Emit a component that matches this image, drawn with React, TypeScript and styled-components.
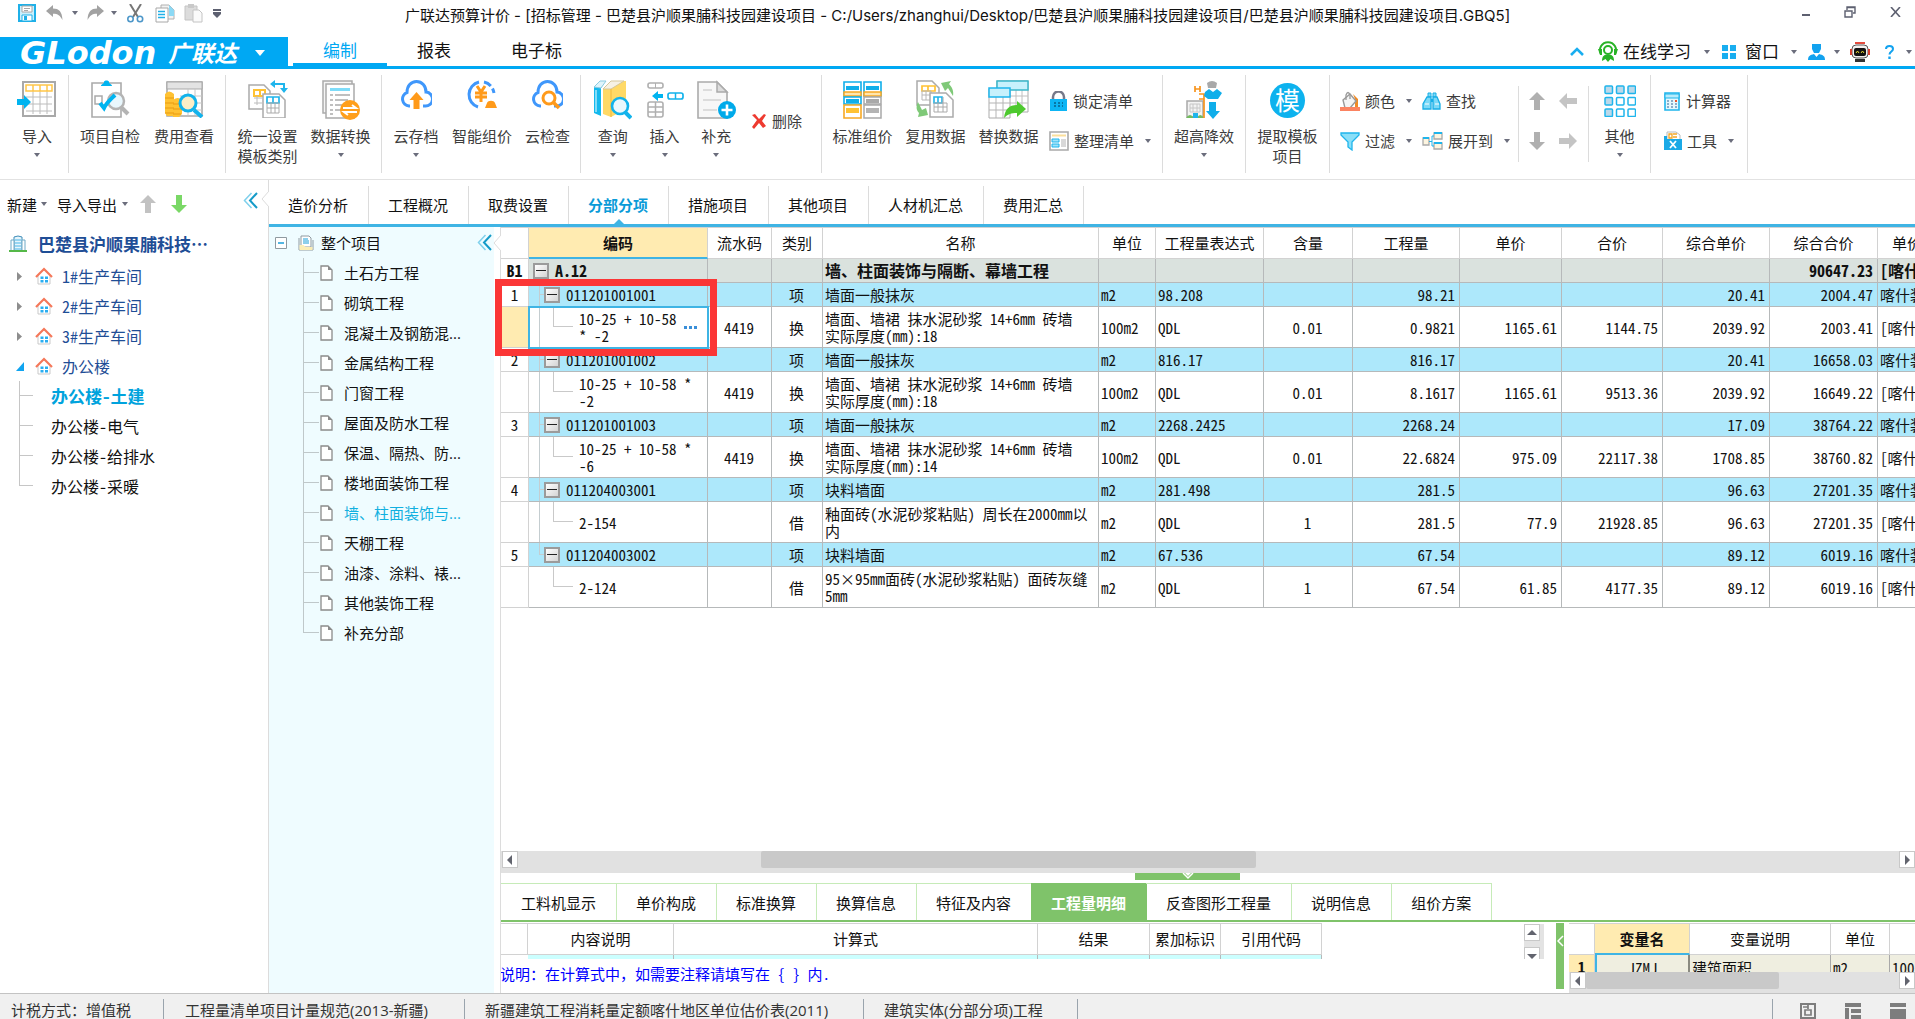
import React from "react";
import styled, { createGlobalStyle, css } from "styled-components";

const UI = `"Open Sans", "Noto Sans CJK SC", sans-serif`;
const MONO = `"Noto Sans Mono CJK SC", "Liberation Mono", "Noto Sans CJK SC", monospace`;
const BLUE = "#00a8f3";
const LINE = "#3fb4e4";
const GREEN = "#7fc36a";

const GlobalStyle = createGlobalStyle`
  *, *::before, *::after { box-sizing: border-box; }
  body { margin: 0; overflow: hidden; background: #fff; font-family: ${UI}; font-size: 15px; color: #111; }
  button { font: inherit; color: inherit; border: 0; background: none; padding: 0; margin: 0; cursor: pointer; white-space: nowrap; }
  ul { list-style: none; margin: 0; padding: 0; }
  svg { display: block; flex: none; }
`;

const Page = styled.div`
  display: flex;
  flex-direction: column;
  height: 100vh;
  overflow: hidden;
`;

const Caret = styled.span<{ $gap?: number }>`
  flex: none;
  width: 0;
  height: 0;
  margin-left: ${(p) => p.$gap ?? 0}px;
  border: 3px solid transparent;
  border-top: 4px solid #6b6d7c;
  border-bottom: 0;
`;

/* ---------- title bar ---------- */

const TitleBar = styled.header`
  display: grid;
  grid-template-columns: 1fr auto 1fr;
  height: 37px;
  flex: none;
`;
const QuickBar = styled.div`
  display: flex;
  align-items: center;
  height: 26px;
  padding-left: 18px;
`;
const QuickButton = styled.button<{ $gap: number }>`
  display: flex;
  align-items: center;
  margin-right: ${(p) => p.$gap}px;
`;
const Title = styled.h1`
  margin: 0;
  font-family: Inter, "Noto Sans CJK SC", sans-serif;
  font-size: 15px;
  font-weight: 400;
  line-height: 32px;
  white-space: nowrap;
`;
const WindowButtons = styled.div`
  display: flex;
  justify-content: flex-end;
  align-items: center;
  gap: 34px;
  height: 24px;
  padding-right: 14px;
`;

/* ---------- main menu ---------- */

const MenuBar = styled.nav`
  display: flex;
  align-items: stretch;
  flex: none;
  height: 32px;
  border-bottom: 3px solid ${BLUE};
`;
const Brand = styled.button`
  display: flex;
  align-items: center;
  width: 288px;
  height: 32px;
  padding-left: 20px;
  margin-right: 5px;
  background: ${BLUE};
  color: #fff;
  line-height: 31px;
`;
const BrandLatin = styled.span`
  font: italic 700 32px/31px "DejaVu Sans", sans-serif;
  width: 148px;
  text-align: left;
`;
const BrandCjk = styled.span`
  font-size: 23px;
  font-style: italic;
  font-weight: 700;
`;
const BrandCaret = styled.span`
  margin-left: 18px;
  border: 5px solid transparent;
  border-top: 6px solid #fff;
  border-bottom: 0;
`;
const MenuTab = styled.button<{ $active?: boolean }>`
  height: 29px;
  padding: 0 30px;
  font-size: 17px;
  line-height: 28px;
  color: ${(p) => (p.$active ? BLUE : "#111")};
  border-bottom: 3px solid ${(p) => (p.$active ? BLUE : "transparent")};
`;
const MenuRight = styled.div`
  display: flex;
  align-items: center;
  margin-left: auto;
  padding-right: 3px;
`;
const MenuTool = styled.button<{ $gap?: number; $inner?: number }>`
  display: flex;
  align-items: center;
  margin-left: ${(p) => p.$gap ?? 12}px;
  font-size: 17px;
  line-height: 28px;
  gap: ${(p) => p.$inner ?? 5}px;
`;

/* ---------- ribbon ---------- */

const Ribbon = styled.div`
  display: flex;
  flex: none;
  height: 111px;
  padding: 6px 0;
  border-bottom: 1px solid #e2e2e2;
  color: #3c3c3c;
`;
const Group = styled.div<{ $w: number; $pad?: number }>`
  display: flex;
  flex: none;
  width: ${(p) => p.$w}px;
  padding-left: ${(p) => p.$pad ?? 0}px;
  border-right: 1px solid #dcdcdc;
`;
const BigButton = styled.button<{ $w: number }>`
  display: flex;
  flex-direction: column;
  align-items: center;
  width: ${(p) => p.$w}px;
  padding-top: 5px;
  line-height: 20px;
  ${Caret} { margin-top: 7px; }
`;
const IconBox = styled.span`
  display: flex;
  justify-content: center;
  align-items: flex-start;
  height: 39px;
  margin-bottom: 7px;
`;
const SmallGrid = styled.div<{ $cols: string; $single?: boolean; $left?: number }>`
  display: grid;
  grid-template-columns: ${(p) => p.$cols};
  grid-template-rows: ${(p) => (p.$single ? "80px" : "40px 40px")};
  padding: 6px 0 6px ${(p) => p.$left ?? 0}px;
  align-items: center;
`;
const SmallButton = styled.button`
  display: flex;
  align-items: center;
  gap: 5px;
  line-height: 20px;
`;
const ArrowGrid = styled.div`
  display: grid;
  grid-template-columns: 31px 31px;
  grid-template-rows: 40px 40px;
  width: 71px;
  height: 76px;
  margin-top: 11px;
  padding: 0 0 6px 9px;
  border: solid #dcdcdc;
  border-width: 0 1px;
  place-items: center start;
  align-content: center;
`;
const TilesBox = styled.span`
  padding-top: 5px;
`;
const RoundGlyph = styled.span`
  display: flex;
  align-items: center;
  justify-content: center;
  width: 35px;
  height: 35px;
  margin-top: 3px;
  border-radius: 50%;
  background: #0db2ee;
  color: #fff;
  font-size: 25px;
  line-height: 35px;
`;

/* ---------- panels ---------- */

const Body = styled.div`
  display: flex;
  flex: 1;
  min-height: 0;
`;
const ProjectPanel = styled.aside`
  position: relative;
  flex: none;
  width: 269px;
  border-right: 1px solid #dcdcdc;
`;
const PanelTools = styled.div`
  display: flex;
  align-items: center;
  height: 48px;
  padding: 0 10px 0 7px;
`;
const PanelTool = styled.button<{ $gap?: number }>`
  display: flex;
  align-items: center;
  margin-left: ${(p) => p.$gap ?? 0}px;
`;
const CollapseButton = styled.button<{ $raised?: boolean }>`
  margin-left: auto;
  padding-bottom: ${(p) => (p.$raised ? 8 : 0)}px;
`;
const Notch = styled.svg<{ $top: number }>`
  position: absolute;
  right: -1px;
  top: ${(p) => p.$top}px;
`;
const ProjectTree = styled.ul`
  font-family: ${MONO};
  font-size: 16px;
  color: #1f4e96;
`;
const ProjectRow = styled.li<{ $root?: boolean }>`
  display: flex;
  align-items: center;
  height: 30px;
  padding-left: ${(p) => (p.$root ? 9 : 16)}px;
  ${(p) =>
    p.$root &&
    css`
      font-size: 17px;
      font-weight: 700;
      margin-bottom: 3px;
    `}
`;
const Twisty = styled.span`
  width: 19px;
`;
const TreeText = styled.button<{ $gap: number }>`
  margin-left: ${(p) => p.$gap}px;
`;
const SubTree = styled.ul`
  margin-left: 19px;
  color: #111;
`;
const SubRow = styled.li<{ $active?: boolean }>`
  display: flex;
  height: 30px;
  line-height: 30px;
  font-family: ${MONO};
  font-size: 16px;
  border-left: 1px solid #c6c6c6;
  &::before {
    content: "";
    width: 13px;
    height: 15px;
    margin-right: 18px;
    border-bottom: 1px solid #c6c6c6;
  }
  &:last-child { border-left-color: transparent; }
  &:last-child::before {
    margin-left: -1px;
    width: 14px;
    border-left: 1px solid #c6c6c6;
  }
  ${(p) =>
    p.$active &&
    css`
      color: #00a3dd;
      font-size: 17px;
      font-weight: 700;
    `}
`;

const Work = styled.main`
  display: flex;
  flex-direction: column;
  flex: 1;
  min-width: 0;
`;
const WorkTabs = styled.div`
  display: flex;
  align-items: flex-end;
  flex: none;
  height: 47px;
  border-bottom: 3px solid ${LINE};
`;
const WorkTab = styled.button<{ $active?: boolean }>`
  position: relative;
  height: 38px;
  padding: 0 20px 0 19px;
  border-right: 1px solid #dcdcdc;
  line-height: 38px;
  ${(p) =>
    p.$active &&
    css`
      color: #0a9bd8;
      font-weight: 700;
      &::after {
        content: "";
        position: absolute;
        left: 50%;
        bottom: 0;
        margin-left: -5px;
        border: 5px solid transparent;
        border-top: 0;
        border-bottom-color: ${LINE};
      }
    `}
`;
const WorkBody = styled.div`
  display: flex;
  flex: 1;
  min-height: 0;
`;
const SectionPanel = styled.aside`
  position: relative;
  flex: none;
  width: 232px;
  border-right: 1px solid #dcdcdc;
  padding-right: 6px;
`;
const SectionTree = styled.div`
  height: 100%;
  background: #effcff;
`;
const SectionRoot = styled.div`
  display: flex;
  align-items: center;
  height: 31px;
  padding: 0 2px 0 6px;
`;
const RootLabel = styled.button`
  display: flex;
  align-items: center;
  gap: 7px;
  margin-left: 11px;
`;
const SectionList = styled.ul`
  margin-left: 34px;
`;
const SectionRow = styled.li<{ $active?: boolean }>`
  display: flex;
  height: 30px;
  line-height: 30px;
  border-left: 1px solid #bfc8ca;
  color: ${(p) => (p.$active ? "#12b0e0" : "#111")};
  svg { margin: 7px 11px 0 1px; }
  &::before {
    content: "";
    width: 15px;
    height: 15px;
    border-bottom: 1px solid #bfc8ca;
  }
  &:last-child { border-left-color: transparent; }
  &:last-child::before {
    margin-left: -1px;
    width: 16px;
    border-left: 1px solid #bfc8ca;
  }
`;

const DataPanel = styled.section`
  display: flex;
  flex-direction: column;
  flex: 1;
  min-width: 0;
`;

/* ---------- bill grid ---------- */

const GridArea = styled.div`
  position: relative;
  flex: 1;
  min-height: 0;
`;
const GridClip = styled.div`
  height: 100%;
  overflow: hidden;
`;
const GridTable = styled.table`
  table-layout: fixed;
  width: 0;
  border-spacing: 0;
  font-family: ${MONO};
  font-size: 15px;
  line-height: 17px;
  color: #111;
`;
const Col = styled.col<{ $w: number }>`
  width: ${(p) => p.$w}px;
`;
const Th = styled.th<{ $hot?: boolean; $left?: boolean }>`
  height: 32px;
  padding: 1px 0 0 ${(p) => (p.$left ? 14 : 0)}px;
  overflow: hidden;
  white-space: nowrap;
  text-align: ${(p) => (p.$left ? "left" : "center")};
  font-family: ${UI};
  font-weight: ${(p) => (p.$hot ? 700 : 400)};
  background: ${(p) => (p.$hot ? "#ffebb1" : "#fff")};
  border: solid #d2d2d2;
  border-width: 1px 1px 1px 0;
  ${(p) => p.$hot && css`border-bottom: 2px solid ${LINE};`}
`;
type Kind = "total" | "item" | "sub";
const rowBg: Record<Kind, string> = { total: "#dae2de", item: "#ade8fb", sub: "#fff" };
const Row = styled.tr<{ $kind: Kind }>`
  height: ${(p) => (p.$kind === "sub" ? 41 : 24)}px;
  background: ${(p) => rowBg[p.$kind]};
  font-size: ${(p) => (p.$kind === "total" ? 16 : 15)}px;
  font-weight: ${(p) => (p.$kind === "total" ? 700 : 400)};
`;
const Td = styled.td<{ $align?: "left" | "center" | "right"; $selected?: boolean }>`
  padding: 0 4px 0 ${(p) => (p.$align === "center" ? 3 : 2)}px;
  overflow: hidden;
  white-space: pre;
  text-align: ${(p) => p.$align ?? "left"};
  border: solid #b6b9ba;
  border-width: 0 1px 1px 0;
  ${(p) =>
    p.$selected &&
    css`
      outline: 2px solid ${LINE};
      outline-offset: -1px;
    `}
`;
const RowHead = styled.th<{ $hot?: boolean; $bold?: boolean }>`
  padding: 0;
  font-weight: ${(p) => (p.$bold ? 700 : "inherit")};
  background: ${(p) => (p.$hot ? "#ffebb1" : "#fff")};
  border: solid #d2d2d2;
  border-width: 0 1px 1px 0;
`;
const CodeCell = styled.div<{ $h: number }>`
  display: flex;
  align-items: center;
  height: ${(p) => p.$h}px;
  margin: 0 -4px 0 -2px;
`;
const Trunk = styled.span<{ $end?: boolean }>`
  align-self: flex-start;
  width: 11px;
  height: ${(p) => (p.$end ? "50%" : "100%")};
  border-right: 1px solid #c4cdd0;
`;
const Elbow = styled.span<{ $after: number }>`
  align-self: flex-start;
  width: 20px;
  height: 20px;
  margin: 0 6px 0 ${(p) => p.$after}px;
  border: solid #c9c9c9;
  border-width: 0 0 1px 1px;
`;
const Stub = styled.span<{ $blank?: boolean }>`
  width: 4px;
  border-top: 1px solid ${(p) => (p.$blank ? "transparent" : "#c4cdd0")};
`;
const FoldBox = styled.button`
  display: flex;
  align-items: center;
  justify-content: center;
  width: 16px;
  height: 16px;
  margin-right: 6px;
  border: 2px solid #9b9b9b;
  background: linear-gradient(135deg, #fff, #d4d4d4);
  &::before {
    content: "";
    width: 10px;
    height: 1px;
    background: #222;
  }
`;
const More = styled.button`
  display: flex;
  gap: 2px;
  margin-left: auto;
  margin-right: 10px;
  span { width: 3px; height: 3px; background: #3a8fd9; }
`;
const Highlight = styled.div`
  position: absolute;
  left: -6px;
  top: 52px;
  width: 222px;
  height: 77px;
  border: 7px solid #fb3636;
  pointer-events: none;
`;

/* ---------- scroll bars ---------- */

const HScroll = styled.div`
  display: flex;
  align-items: flex-start;
  flex: none;
  height: 22px;
  padding-left: 1px;
  background: #e1e1e1;
  overflow: hidden;
`;
const ScrollButton = styled.button`
  display: flex;
  align-items: center;
  justify-content: center;
  flex: none;
  width: 16px;
  height: 17px;
  background: #fff;
  border: 1px solid #c8c8c8;
`;
const Thumb = styled.span<{ $w: string; $before: string }>`
  width: ${(p) => p.$w};
  height: 17px;
  margin-left: ${(p) => p.$before};
  margin-right: auto;
  border-radius: 2px;
  background: #c9c9c9;
`;

/* ---------- lower panel ---------- */

const HandleRow = styled.div`
  display: flex;
  justify-content: center;
  flex: none;
  height: 10px;
  padding-right: 41px;
`;
const Handle = styled.button`
  display: flex;
  justify-content: center;
  width: 105px;
  height: 7px;
  background: ${GREEN};
`;
const DetailTabs = styled.div`
  display: flex;
  flex: none;
  height: 39px;
  border-bottom: 2px solid ${GREEN};
`;
const DetailTab = styled.button<{ $active?: boolean }>`
  padding: 2px 20px 0 20px;
  border: solid #c6ebb8;
  border-width: 1px 1px 0 0;
  margin-left: -1px;
  &:first-child { margin-left: 0; }
  line-height: 34px;
  ${(p) =>
    p.$active &&
    css`
      border-color: ${GREEN};
      background: ${GREEN};
      color: #fff;
      font-weight: 700;
    `}
`;
const Details = styled.div`
  display: flex;
  flex: none;
  height: 71px;
`;
const FormulaPane = styled.div`
  flex: 1;
  min-width: 0;
`;
const FormulaTop = styled.div`
  display: flex;
  height: 37px;
  padding-right: 12px;
`;
const TableClip = styled.div<{ $h: number }>`
  flex: 1;
  height: ${(p) => p.$h}px;
  overflow: hidden;
  padding-top: 1px;
`;
const VScroll = styled.div`
  display: flex;
  flex-direction: column;
  gap: 6px;
  width: 20px;
  margin-top: 2px;
  height: 35px;
  overflow: hidden;
  background: #e3e3e3;
`;
const Hint = styled.p`
  margin: 0 0 0 -1px;
  font-family: ${MONO};
  line-height: 30px;
  color: #0000ff;
  white-space: nowrap;
`;
const Splitter = styled.button`
  display: flex;
  align-items: flex-start;
  justify-content: center;
  width: 8px;
  height: 66px;
  padding-top: 12px;
  margin: 1px 5px 0 0;
  background: ${GREEN};
`;
const VariablePane = styled.div`
  flex: none;
  width: 346px;
  overflow: hidden;
`;
const FormulaCell = styled.td`
  height: 12px;
  padding: 0;
  background: #ccffff;
  border-right: 1px solid #b6b9ba;
`;
const VarCell = styled.td<{ $on?: boolean; $center?: boolean }>`
  height: 24px;
  padding: 0 2px;
  background: #efeee0;
  border-right: 1px solid #a9a9a9;
  text-align: ${(p) => (p.$center ? "center" : "left")};
  white-space: nowrap;
  ${(p) =>
    p.$on &&
    css`
      border-left: 2px solid ${LINE};
      border-right: 2px solid #8a8a80;
    `}
`;

/* ---------- status bar ---------- */

const StatusBar = styled.footer`
  display: flex;
  align-items: flex-end;
  flex: none;
  height: 26px;
  border-top: 1px solid #c3c3c3;
  background: #f0f0f0;
  color: #333;
  overflow: hidden;
`;
const Status = styled.span<{ $w: number; $pad: number }>`
  width: ${(p) => p.$w}px;
  height: 20px;
  padding-left: ${(p) => p.$pad}px;
  border-right: 1px solid #9aa4ad;
  line-height: 22px;
  white-space: nowrap;
`;
const Views = styled.div`
  display: flex;
  gap: 29px;
  height: 20px;
  margin-left: auto;
  padding: 4px 9px 0 27px;
  border-left: 1px solid #9aa4ad;
`;

/* ---------- icons ---------- */

type SvgP = { w: number; h: number; children: React.ReactNode };
const S = ({ w, h, children }: SvgP) => (
  <svg width={w} height={h} viewBox={`0 0 ${w} ${h}`} fill="none" aria-hidden="true">
    {children}
  </svg>
);

const SaveIcon = () => (
  <S w={18} h={18}>
    <path d="M1 1h16v16H1z" stroke="#1fb0e8" strokeWidth="2" fill="#c9effc" />
    <path d="M4 2h10v6H4z" fill="#fff" stroke="#a8a8a8" />
    <path d="M6 4.500h6M6 6.500h4" stroke="#a8a8a8" />
    <path d="M4 11h10v6H4z" fill="#fff" stroke="#1fb0e8" />
    <path d="M6 12h3v4H6z" fill="#1fb0e8" />
  </S>
);
const UndoIcon = () => (
  <S w={18} h={16}>
    <path d="M0 6l7-6v3.500c6 0 9 3 9.500 11.500C14 10.500 12 8.700 7 8.700V12z" fill="#a2a2a2" />
  </S>
);
const RedoIcon = () => (
  <S w={18} h={16}>
    <path d="M17 6l-7-6v3.500C4 3.500 1 6.500.5 15 3 10.500 5 8.700 10 8.700V12z" fill="#a2a2a2" />
  </S>
);
const CutIcon = () => (
  <S w={17} h={19}>
    <path d="M3 0l8 13M14 0L6 13" stroke="#777" strokeWidth="2" />
    <circle cx="3.500" cy="15" r="2.700" stroke="#4d97c9" strokeWidth="1.600" />
    <circle cx="13" cy="15" r="2.700" stroke="#4d97c9" strokeWidth="1.600" />
  </S>
);
const CopyIcon = () => (
  <S w={20} h={19}>
    <path d="M6 1h8l5 5v9H6z" fill="#f2f2f2" stroke="#b0b0b0" />
    <path d="M14 1l5 5v6h-5z" fill="#8bd9f5" />
    <path d="M1 4h12v14H1z" fill="#fff" stroke="#a8a8a8" />
    <path d="M3 7.500h7M3 10.500h7M3 13.500h7" stroke="#1fb0e8" strokeWidth="1.600" />
  </S>
);
const PasteIcon = () => (
  <S w={20} h={20}>
    <path d="M1 3h12v14H1z" fill="#dcdcdc" stroke="#c4c4c4" />
    <path d="M4 1h6v4H4z" fill="#c9c9c9" />
    <path d="M9 7h6l3 3v9H9z" fill="#fafafa" stroke="#c4c4c4" />
  </S>
);
const CustomizeIcon = () => (
  <S w={8} h={9}>
    <path d="M0 1h8M0 4h8" stroke="#5d6070" strokeWidth="2" />
    <path d="M0 5h8L4 9z" fill="#5d6070" />
  </S>
);
const MinIcon = () => (
  <S w={9} h={11}>
    <path d="M1 8h8" stroke="#5d6070" strokeWidth="2" />
  </S>
);
const RestoreIcon = () => (
  <S w={12} h={12}>
    <path d="M3 4V1h8v6H9M3 1.500h8" stroke="#5d6070" strokeWidth="1.400" />
    <path d="M1 5h7v6H1z" stroke="#5d6070" strokeWidth="1.400" />
  </S>
);
const CloseIcon = () => (
  <S w={11} h={10}>
    <path d="M1 0l9 10M10 0L1 10" stroke="#5d6070" strokeWidth="1.600" />
  </S>
);
const ChevronUp = () => (
  <S w={14} h={9}>
    <path d="M1 8l6-6 6 6" stroke="#19aef0" strokeWidth="2.600" />
  </S>
);
const LearnIcon = () => (
  <S w={20} h={21}>
    <path d="M3 13a8 8 0 1 1 14 0" stroke="#29b327" strokeWidth="2" />
    <path d="M0 8h4v6H2zM16 8h4l-2 6h-2z" fill="#29b327" />
    <circle cx="10" cy="9" r="4" stroke="#29b327" strokeWidth="2" />
    <path d="M4 20c0-5 2-6.500 6-6.500s6 1.500 6 6.500l-3.500-2L10 21l-2.500-3z" fill="#29b327" />
  </S>
);
const WindowsIcon = () => (
  <S w={14} h={14}>
    <path d="M0 0h6v6H0zM8 0h6v6H8zM0 8h6v6H0zM8 8h6v6H8z" fill="#19aef0" />
  </S>
);
const PersonIcon = () => (
  <S w={17} h={16}>
    <path d="M4 0h9v5l-2 4H6L4 5z" fill="#12a2ef" />
    <path d="M0 16c0-4 2-5 6-6l2.500 3L11 10c4 1 6 2 6 6z" fill="#12a2ef" />
  </S>
);
const RobotIcon = () => (
  <S w={20} h={20}>
    <path d="M5 1h10" stroke="#e44a3c" strokeWidth="2" />
    <rect x="2" y="3" width="16" height="13" rx="4" fill="#f4f0ee" stroke="#555" />
    <path d="M1 7v6M19 7v6" stroke="#d6402f" strokeWidth="2" />
    <rect x="4" y="6" width="12" height="8" rx="2" fill="#111" />
    <path d="M6 11l1.500-2L9 11M11 11l1.500-2 1.500 2" stroke="#e8d832" />
    <path d="M5 17h10v3H5z" fill="#333" />
  </S>
);
const HelpIcon = () => (
  <S w={9} h={14}>
    <path d="M1 4c0-4 7-4 7 0 0 2.500-3.500 2.500-3.500 5.500" stroke="#12a2ef" strokeWidth="2" />
    <path d="M3.300 11.500h2.400V14H3.300z" fill="#12a2ef" />
  </S>
);

const ImportIcon = () => (
  <S w={40} h={38}>
    <path d="M6 2h32v34H6z" fill="#fff" stroke="#a9a9a9" strokeWidth="2" />
    <path d="M9 17h26M9 24h26M9 31h26M16 11v23M23 11v23M30 11v23" stroke="#bcbcbc" />
    <path d="M9 5h26v6H9zM16 5v6M23 5v6M30 5v6" stroke="#ffc648" strokeWidth="1.500" />
    <path d="M0 19h7v-4l7 7-7 7v-4H0z" fill="#00b4f0" />
  </S>
);
const CheckDocIcon = () => (
  <S w={40} h={38}>
    <path d="M2 3h29v34H2z" fill="#fff" stroke="#ababab" strokeWidth="1.600" />
    <path d="M11 6c0-2 3-2 3-4 0-2 5-2 5 0 0 2 3 2 3 4z" fill="#00b4f0" />
    <path d="M5 16h7v8H5z" stroke="#ababab" strokeWidth="1.500" />
    <circle cx="26" cy="21" r="8" fill="#e9f7fd" stroke="#b4b4b4" strokeWidth="2.500" />
    <path d="M10 23l4 5c3-6 7-9 11-13" stroke="#00b4f0" strokeWidth="4" />
    <path d="M31 27l7 7" stroke="#b4b4b4" strokeWidth="4" />
  </S>
);
const CostIcon = () => (
  <S w={40} h={38}>
    <path d="M3 2h35v34H3z" fill="#fff" stroke="#a9a9a9" strokeWidth="1.600" />
    <path d="M3 2h35v7H3z" fill="#e3e3e3" stroke="#a9a9a9" />
    <path d="M16 16h22M16 23h22M16 30h22M24 9v26M31 9v26" stroke="#c6c6c6" />
    <path d="M1 14q4-5 9 0v22H3l-2-3zM9 20q5-4 9 0v14l-3 3H9z" fill="#ffc233" />
    <path d="M1 18h9M1 23h9M1 28h9M1 33h9M9 24h9M9 29h9M9 34h8" stroke="#e89b12" />
    <circle cx="24" cy="23" r="8" fill="#fdeec6" stroke="#12b3ec" strokeWidth="3" />
    <path d="M30 30l8 7" stroke="#12b3ec" strokeWidth="4" />
  </S>
);
const TemplateIcon = () => (
  <S w={40} h={38}>
    <path d="M1 5h15l6 6v18H1z" fill="#fff" stroke="#ababab" strokeWidth="1.500" />
    <path d="M6 10h11v6H6zM12 10v6" stroke="#ffc233" strokeWidth="2" />
    <path d="M6 18h8M6 23h8M9 16v9" stroke="#bcbcbc" />
    <path d="M15 14h16l6 6v18H15z" fill="#fff" stroke="#ababab" strokeWidth="1.500" />
    <path d="M19 17h12v6H19zM25 17v6" stroke="#1fb5ec" strokeWidth="1.700" />
    <path d="M19 23h12v10H19zM19 28h12M23 23v10M27 23v10" stroke="#aaa" />
    <path d="M24 4h12v7" stroke="#1fb5ec" strokeWidth="2" />
    <path d="M22 4l5-4v8zM32 8h8l-4 5z" fill="#1fb5ec" />
  </S>
);
const ConvertIcon = () => (
  <S w={40} h={40}>
    <path d="M2 1h29v32H2z" fill="#f5f5f5" stroke="#aaa" strokeWidth="1.500" />
    <path d="M5 4h28v34H5z" fill="#fff" stroke="#aaa" strokeWidth="1.500" />
    <path d="M9 9.500h20" stroke="#7edcf9" strokeWidth="3" />
    <path d="M9 15h3M14 15h15M9 20h3M14 20h13M9 25h3M14 25h8M9 30h3M14 30h6M9 34h3" stroke="#aaa" strokeWidth="1.500" />
    <circle cx="29" cy="30" r="10" fill="#ff9f1c" />
    <path d="M22 28h13l-4-3M36 32H23l4 3" stroke="#fff" strokeWidth="2" />
  </S>
);
const cloudPath = "M9 26H8a7 7 0 0 1-2-13.500C6 6 10 1.500 15.500 1.500S25 6 25 12a7 7 0 0 1-1 14h-2";
const CloudSaveIcon = () => (
  <S w={31} h={30}>
    <path d={cloudPath} stroke="#3f97fb" strokeWidth="3" />
    <path d="M15.500 12l7 8h-4v9h-6v-9h-4z" fill="#ff9a1a" />
  </S>
);
const SmartIcon = () => (
  <S w={32} h={30}>
    <path d="M13 2a13 13 0 0 0-1 25" stroke="#3f97fb" strokeWidth="3" />
    <path d="M18 2c5 1 9 5 10 11" stroke="#3f97fb" strokeWidth="3" strokeDasharray="8 3" />
    <path d="M11 6l4 6 4-6M9 13h12M9 17h12M15 12v10" stroke="#ff9a1a" strokeWidth="3" />
    <path d="M19 28l2-5c1-3 7-3 8 0l2 5z" fill="#ff9a1a" />
  </S>
);
const CloudCheckIcon = () => (
  <S w={31} h={30}>
    <path d={cloudPath} stroke="#3f97fb" strokeWidth="3" />
    <circle cx="17" cy="18" r="6" fill="#fff" stroke="#ff9a1a" strokeWidth="3" />
    <path d="M21 22l6 6" stroke="#ff9a1a" strokeWidth="3.500" />
  </S>
);
const QueryIcon = () => (
  <S w={39} h={40}>
    <path d="M1 7L7 1h5L8 8v28l-7-3z" fill="#14b9ee" />
    <path d="M1 7l6-6h6l-5 7z" fill="#dff4fb" stroke="#8ccbe0" />
    <path d="M3 10v22" stroke="#a6e8fb" strokeWidth="1.500" />
    <path d="M10 9l8-8h15v28l-15 8-8-3z" fill="#ffd966" />
    <path d="M10 9l8-8h13L18 9z" fill="#f6f1e4" stroke="#d5c79a" />
    <path d="M18 9v28" stroke="#f2b93b" />
    <circle cx="27" cy="26" r="8" fill="#eaf8fd" stroke="#12b3ec" strokeWidth="2.600" />
    <path d="M32 32l6 6" stroke="#12b3ec" strokeWidth="4" />
  </S>
);
const InsertIcon = () => (
  <S w={38} h={38}>
    <rect x="2" y="3" width="15" height="5" rx="2" stroke="#b0b0b0" strokeWidth="1.600" />
    <path d="M9.500 3v5" stroke="#b0b0b0" />
    <rect x="2" y="22" width="15" height="15" rx="2" stroke="#b0b0b0" strokeWidth="1.600" />
    <path d="M2 27h15M2 32h15M9.500 22v15" stroke="#b0b0b0" strokeWidth="1.500" />
    <path d="M6 16l6-5v3h5v4h-5v3z" fill="#00b4f0" />
    <rect x="22" y="13" width="15" height="6" rx="2" stroke="#12b3ec" strokeWidth="1.700" />
    <path d="M29.500 13v6" stroke="#12b3ec" strokeWidth="1.500" />
  </S>
);
const AddDocIcon = () => (
  <S w={39} h={39}>
    <path d="M1 2h19l10 10v26H1z" fill="#f7f7f7" stroke="#ababab" strokeWidth="1.600" />
    <path d="M20 2v10h10z" fill="#dcdcdc" stroke="#ababab" strokeWidth="1.500" />
    <path d="M6 10h9M6 20h18M6 30h14" stroke="#d4d4d4" strokeWidth="1.500" />
    <circle cx="30" cy="30" r="9" fill="#00aaea" />
    <path d="M24.500 30h11M30 24.500v11" stroke="#fff" strokeWidth="2.600" />
  </S>
);
const DeleteIcon = () => (
  <S w={16} h={16}>
    <path d="M1 2l3-1 4 5 5-5 2 1-4 6 4 5-3 2-4-5-5 6-2-2 5-7z" fill="#ee3a30" />
  </S>
);
const StandardIcon = () => (
  <S w={39} h={39}>
    <path d="M1 2h17v14H1zM21 2h17v14H21z" stroke="#10aeea" strokeWidth="1.600" fill="#fff" />
    <path d="M3 6h13v4H3zM23 6h13v4H23z" fill="#10aeea" />
    <path d="M1 12h17v4H1zM21 12h17v4H21z" fill="#ffe6ae" stroke="#f7a824" strokeWidth="1.500" />
    <path d="M1 17h17v7H1z" fill="#fff" stroke="#10aeea" strokeWidth="1.600" />
    <path d="M3 19h13v4H3z" fill="#10aeea" />
    <path d="M21 17h17v7H21z" fill="#fff" stroke="#a9a9a9" strokeWidth="1.500" />
    <path d="M23 19h13v4H23z" fill="#a9a9a9" />
    <path d="M1 25h17v13H1z" fill="#fff" stroke="#f7a824" strokeWidth="1.600" />
    <path d="M3 28h13v5H3z" fill="#ffc233" />
    <path d="M21 25h17v13H21z" fill="#fff" stroke="#a9a9a9" strokeWidth="1.500" />
    <path d="M23 28h13v5H23z" fill="#b4b4b4" />
  </S>
);
const ReuseIcon = () => (
  <S w={39} h={39}>
    <path d="M1 1h15l7 7v17H1z" fill="#fff" stroke="#ababab" strokeWidth="1.500" />
    <path d="M6 6h13v5H6zM12 6v5" stroke="#ffc233" strokeWidth="1.700" />
    <path d="M6 11h9v9H6zM6 15h9M10 11v9" stroke="#b8b8b8" />
    <path d="M14 13h16l7 7v17H14z" fill="#fff" stroke="#ababab" strokeWidth="1.500" />
    <path d="M18 17h8v6h-8zM22 17v6" stroke="#1fb5ec" strokeWidth="1.600" />
    <path d="M18 23h13v9H18zM18 27h13M22 23v9M27 17v15" stroke="#aaa" />
    <path d="M25 3l10-2-2 3c3 3 5 7 4 12l-5-8-3 3z" fill="#7fc978" />
    <path d="M12 35l-10 2 1-4c-3-3-3-7-1-11l4 8 4-2z" fill="#7fc978" />
  </S>
);
const ReplaceIcon = () => (
  <S w={41} h={39}>
    <path d="M9 1h31v31H9z" fill="#fff" stroke="#ababab" />
    <path d="M22 16h18M22 23h18M28 9v22M34 9v22" stroke="#c0c0c0" />
    <path d="M9 1h31v9H9z" fill="#c7f1fc" stroke="#3bb7c9" strokeWidth="1.500" />
    <path d="M1 9h21v29H1z" fill="#fff" stroke="#ababab" />
    <path d="M1 23h21M1 30h21M8 17v21M15 17v21" stroke="#b5b5b5" />
    <path d="M1 8h21v9H1z" fill="#c7f1fc" stroke="#1fb5ec" strokeWidth="1.500" />
    <path d="M16 38c1-9 5-13 13-13v-4l9 8-9 8v-4c-6 0-9 1-13 5z" fill="#4ec92f" />
  </S>
);
const LockIcon = () => (
  <S w={19} h={21}>
    <path d="M4 9V6a5.500 5.500 0 0 1 11 0v3" stroke="#76798a" strokeWidth="2.500" />
    <path d="M1 8h17v12H1z" fill="#0db5f4" />
    <path d="M5 12h2M9 12h2M13 12h1M5 15h2M9 15h2M13 15h1" stroke="#07628a" strokeWidth="1.500" />
  </S>
);
const ArrangeIcon = () => (
  <S w={20} h={20}>
    <path d="M1 1h18v18H1z" fill="#fff" stroke="#a9a9a9" strokeWidth="1.600" />
    <path d="M3 4.500h14" stroke="#fbdf9b" strokeWidth="2" />
    <path d="M3 8h7v3H3zM3 13h7v3H3z" fill="#9fe3fa" stroke="#1fb5ec" />
    <path d="M12 8h5v8h-5z" fill="#d8d8d8" />
  </S>
);
const HighRiseIcon = () => (
  <S w={38} h={40}>
    <path d="M2 21h16v16H2z" fill="#f3f3f3" stroke="#a9a9a9" strokeWidth="1.500" />
    <path d="M5 24h10v8H5zM5 28h10M8 24v8M12 24v8" stroke="#c6c6c6" />
    <path d="M1 38q4-6 8 0zM12 38q3-6 7 0z" fill="#74bb60" />
    <path d="M8 33h5v5H8z" fill="#1fb5ec" />
    <path d="M10 6v6M15 6v6M10 9h5M14 14h5v24M14 19h5" stroke="#f7941d" strokeWidth="1.700" />
    <path d="M22 3q5-4 10 0l-1 5h-8z" fill="#a9a9a9" />
    <path d="M20 12l4-3 4 3 4-3 5 4-4 6H23l-4-3z" fill="#10aeea" />
    <path d="M24 22h7v9h4l-7 8-7-8h3z" fill="#10aeea" />
  </S>
);
const ColorIcon = () => (
  <S w={20} h={21}>
    <path d="M13 3l5 5v8h-3V8z" fill="#f08a24" />
    <path d="M3 9l7-6 6 7-6 7H5z" fill="#f4f4f4" stroke="#999" strokeWidth="1.400" />
    <path d="M6 9V4q2-5 4 0v4" stroke="#999" strokeWidth="1.300" />
    <path d="M0 16h20v4H0z" fill="#fb8361" />
  </S>
);
const FindIcon = () => (
  <S w={19} h={18}>
    <path d="M6 1h3v4H6zM11 1h3v4h-3z" fill="#7cd9f7" stroke="#18aee6" />
    <path d="M5 5h4v12H1v-5zM11 5h4l3 7v5h-7z" fill="#7cd9f7" stroke="#18aee6" strokeWidth="1.300" />
    <path d="M9 7h2v3H9z" fill="#18aee6" />
    <path d="M3 12h4M13 12h4" stroke="#fff" />
  </S>
);
const FilterIcon = () => (
  <S w={20} h={19}>
    <path d="M1 1h18v2l-7 7v8l-4-3v-5L1 3z" fill="#8adff8" stroke="#1fb5ec" strokeWidth="1.300" />
  </S>
);
const ExpandIcon = () => (
  <S w={21} h={20}>
    <path d="M1 7h6v7H1zM12 2h8v6h-8zM12 12h8v6h-8z" fill="#fdf5e0" stroke="#a9a9a9" strokeWidth="1.300" />
    <path d="M1 7h6M12 2h8M12 12h8" stroke="#1fb5ec" strokeWidth="2" />
    <path d="M7 10.500h3M10 5v10M10 5h2M10 15h2" stroke="#1fb5ec" />
  </S>
);
const ArrowSvg = ({ dir, color = "#b0b0b0" }: { dir: number; color?: string }) => (
  <svg width={18} height={18} viewBox="0 0 18 18" aria-hidden="true">
    <path transform={`rotate(${dir} 9 9)`} d="M9 0l8 8h-5v10H6V8H1z" fill={color} />
  </svg>
);
const TilesIcon = () => (
  <S w={32} h={32}>
    {[0, 1, 2].map((r) =>
      [0, 1, 2].map((c) => (
        <rect
          key={`${r}${c}`}
          x={1 + c * 11.5}
          y={1 + r * 11.5}
          width="7.500"
          height="7.500"
          rx="1"
          stroke="#1fb5ec"
          strokeWidth="1.500"
          fill={r === 0 || c === 0 ? "#bcd9ea" : "#fff"}
        />
      )),
    )}
  </S>
);
const CalcIcon = () => (
  <S w={17} h={19}>
    <path d="M1 1h14v17H1z" fill="#e4f7fd" stroke="#1fb5ec" strokeWidth="1.600" />
    <path d="M1 2h14v4H1z" fill="#b8ebfb" stroke="#1fb5ec" />
    <path d="M3 9h2M7 9h2M3 12h2M7 12h2M11 12h2M3 15h2M7 15h2M11 15h2" stroke="#6b95b8" strokeWidth="1.500" />
    <path d="M11 8h2v2h-2z" fill="#e8562f" />
  </S>
);
const ToolIcon = () => (
  <S w={18} h={20}>
    <path d="M3 1h9l4 3v6H3z" fill="#fff" stroke="#bbb" />
    <path d="M5 3h3v4H5zM9 3h4M9 6h4" stroke="#f5a623" strokeWidth="1.300" />
    <path d="M0 5h3v3h15v11H0z" fill="#1ba9e6" />
    <path d="M6 10l6 7M12 10l-6 7" stroke="#fff" strokeWidth="1.800" />
  </S>
);

const DoubleLeft = () => (
  <S w={15} h={17}>
    <path d="M8.500 1L1.500 8.500l7 7.500" stroke="#7fd0ec" strokeWidth="1.500" />
    <path d="M14 1L7 8.500l7 7.500" stroke="#159bc8" strokeWidth="2" />
  </S>
);
const BuildingIcon = () => (
  <S w={18} h={17}>
    <path d="M5 2l4-1 4 1v14H5z" fill="#e6f5fc" stroke="#3d8cb8" />
    <path d="M2 5h3v11H2zM13 5h3v11h-3z" fill="#fff" stroke="#6ea9c6" />
    <path d="M7 4v11M9 4v11M11 4v11" stroke="#48b5e8" strokeDasharray="2 1" />
    <path d="M0 16h18" stroke="#55b848" strokeWidth="2" />
  </S>
);
const HouseIcon = () => (
  <S w={18} h={18}>
    <path d="M3 8v9h12V8L9 3z" fill="#fff" stroke="#c9c9c9" />
    <path d="M1 10l8-8 8 8" stroke="#f5785a" strokeWidth="2.200" />
    <path d="M5.500 9.500h3v2.500h-3zM10 9.500h3v2.500h-3zM5.500 13h3v2.500h-3zM10 13h3v2.500h-3z" fill="#29aef2" />
  </S>
);
const ClosedTwisty = () => (
  <S w={7} h={9}>
    <path d="M1 0l5 4.500L1 9z" fill="#8d8d8d" />
  </S>
);
const OpenTwisty = () => (
  <S w={8} h={9}>
    <path d="M8 0v9H0z" fill="#10a4f0" />
  </S>
);
const RootFold = () => (
  <S w={12} h={12}>
    <path d="M.5.5h11v11H.5z" fill="#fff" stroke="#8f9aa0" />
    <path d="M3 6h6" stroke="#1b9ed8" strokeWidth="1.500" />
  </S>
);
const ProjectIcon = () => (
  <S w={16} h={16}>
    <path d="M3 1h8l2 2v9H3z" fill="#fff" stroke="#8f9aa0" />
    <path d="M5 4h5M5 6h6M5 8h6" stroke="#1b9ed8" />
    <path d="M1 3v12h14V5" stroke="#8f9aa0" />
    <path d="M1.500 10h4l2 2h7v3h-13z" fill="#fbedb5" />
  </S>
);
const PageIcon = () => (
  <S w={13} h={16}>
    <path d="M1 1h7l4 4v10H1z" fill="#fff" stroke="#8b8b8b" strokeWidth="1.300" />
    <path d="M8 1v4h4z" fill="#8b8b8b" />
  </S>
);
const Tri = ({ dir }: { dir: number }) => (
  <svg width={10} height={10} viewBox="0 0 10 10" aria-hidden="true">
    <path transform={`rotate(${dir} 5 5)`} d="M7 0v10L2 5z" fill="#62646e" />
  </svg>
);

/* ---------- data ---------- */

const workTabs = ["造价分析", "工程概况", "取费设置", "分部分项", "措施项目", "其他项目", "人材机汇总", "费用汇总"];
const sections = [
  "土石方工程",
  "砌筑工程",
  "混凝土及钢筋混...",
  "金属结构工程",
  "门窗工程",
  "屋面及防水工程",
  "保温、隔热、防...",
  "楼地面装饰工程",
  "墙、柱面装饰与...",
  "天棚工程",
  "油漆、涂料、裱...",
  "其他装饰工程",
  "补充分部",
];
const detailTabs = ["工料机显示", "单价构成", "标准换算", "换算信息", "特征及内容", "工程量明细", "反查图形工程量", "说明信息", "组价方案"];

const gridCols = [28, 179, 64, 51, 276, 57, 108, 89, 107, 102, 101, 107, 108, 60];
const gridHead = ["", "编码", "流水码", "类别", "名称", "单位", "工程量表达式", "含量", "工程量", "单价", "合价", "综合单价", "综合合价", "单价"];

type Item = {
  kind: Kind;
  no: string;
  code: string;
  serial?: string;
  type?: string;
  name: string;
  unit?: string;
  expr?: string;
  content?: string;
  qty?: string;
  price?: string;
  total?: string;
  unitAll?: string;
  sumAll: string;
  file: string;
  last?: boolean;
  selected?: boolean;
};

const rows: Item[] = [
  { kind: "total", no: "B1", code: "A.12", name: "墙、柱面装饰与隔断、幕墙工程", sumAll: "90647.23", file: "[喀什" },
  { kind: "item", no: "1", code: "011201001001", type: "项", name: "墙面一般抹灰", unit: "m2", expr: "98.208", qty: "98.21", unitAll: "20.41", sumAll: "2004.47", file: "喀什装" },
  { kind: "sub", no: "", code: "10-25 + 10-58\n* -2", serial: "4419", type: "换", name: "墙面、墙裙 抹水泥砂浆 14+6mm 砖墙\n实际厚度(mm):18", unit: "100m2", expr: "QDL", content: "0.01", qty: "0.9821", price: "1165.61", total: "1144.75", unitAll: "2039.92", sumAll: "2003.41", file: "[喀什", selected: true },
  { kind: "item", no: "2", code: "011201001002", type: "项", name: "墙面一般抹灰", unit: "m2", expr: "816.17", qty: "816.17", unitAll: "20.41", sumAll: "16658.03", file: "喀什装" },
  { kind: "sub", no: "", code: "10-25 + 10-58 *\n-2", serial: "4419", type: "换", name: "墙面、墙裙 抹水泥砂浆 14+6mm 砖墙\n实际厚度(mm):18", unit: "100m2", expr: "QDL", content: "0.01", qty: "8.1617", price: "1165.61", total: "9513.36", unitAll: "2039.92", sumAll: "16649.22", file: "[喀什" },
  { kind: "item", no: "3", code: "011201001003", type: "项", name: "墙面一般抹灰", unit: "m2", expr: "2268.2425", qty: "2268.24", unitAll: "17.09", sumAll: "38764.22", file: "喀什装" },
  { kind: "sub", no: "", code: "10-25 + 10-58 *\n-6", serial: "4419", type: "换", name: "墙面、墙裙 抹水泥砂浆 14+6mm 砖墙\n实际厚度(mm):14", unit: "100m2", expr: "QDL", content: "0.01", qty: "22.6824", price: "975.09", total: "22117.38", unitAll: "1708.85", sumAll: "38760.82", file: "[喀什" },
  { kind: "item", no: "4", code: "011204003001", type: "项", name: "块料墙面", unit: "m2", expr: "281.498", qty: "281.5", unitAll: "96.63", sumAll: "27201.35", file: "喀什装" },
  { kind: "sub", no: "", code: "2-154", type: "借", name: "釉面砖(水泥砂浆粘贴) 周长在2000mm以\n内", unit: "m2", expr: "QDL", content: "1", qty: "281.5", price: "77.9", total: "21928.85", unitAll: "96.63", sumAll: "27201.35", file: "[喀什" },
  { kind: "item", no: "5", code: "011204003002", type: "项", name: "块料墙面", unit: "m2", expr: "67.536", qty: "67.54", unitAll: "89.12", sumAll: "6019.16", file: "喀什装", last: true },
  { kind: "sub", no: "", code: "2-124", type: "借", name: "95×95mm面砖(水泥砂浆粘贴) 面砖灰缝\n5mm", unit: "m2", expr: "QDL", content: "1", qty: "67.54", price: "61.85", total: "4177.35", unitAll: "89.12", sumAll: "6019.16", file: "[喀什", last: true },
];

const Code = ({ r }: { r: Item }) => {
  if (r.kind === "sub")
    return (
      <CodeCell $h={40}>
        {!r.last && <Trunk />}
        <Elbow $after={r.last ? 24 : 13} />
        <div>{r.code}</div>
        {r.selected && (
          <More aria-label="更多">
            <span />
            <span />
            <span />
          </More>
        )}
      </CodeCell>
    );
  return (
    <CodeCell $h={23}>
      {r.kind === "item" && <Trunk $end={r.last} />}
      <Stub $blank={r.kind === "total"} />
      <FoldBox aria-label="折叠" />
      {r.code}
    </CodeCell>
  );
};

type BigProps = { w: number; icon: React.ReactNode; label: string; second?: string; menu?: boolean };
const Big = ({ w, icon, label, second, menu }: BigProps) => (
  <BigButton $w={w}>
    <IconBox>{icon}</IconBox>
    <span>{label}</span>
    {second && <span>{second}</span>}
    {menu && <Caret />}
  </BigButton>
);
type SmallProps = { icon: React.ReactNode; label: string; menu?: boolean };
const Small = ({ icon, label, menu }: SmallProps) => (
  <SmallButton>
    {icon}
    <span>{label}</span>
    {menu && <Caret $gap={6} />}
  </SmallButton>
);

const NotchShape = ({ top }: { top: number }) => (
  <Notch $top={top} width={8} height={26} viewBox="0 0 8 26" fill="#fff" aria-hidden="true">
    <path d="M8 0v4L1 12l7 8v6" stroke="#dcdcdc" />
  </Notch>
);

export default function App() {
  return (
    <Page>
      <GlobalStyle />
      <TitleBar>
        <QuickBar>
          <QuickButton $gap={10} aria-label="保存"><SaveIcon /></QuickButton>
          <QuickButton $gap={9} aria-label="撤销"><UndoIcon /><Caret $gap={8} /></QuickButton>
          <QuickButton $gap={10} aria-label="恢复"><RedoIcon /><Caret $gap={6} /></QuickButton>
          <QuickButton $gap={11} aria-label="剪切"><CutIcon /></QuickButton>
          <QuickButton $gap={9} aria-label="复制"><CopyIcon /></QuickButton>
          <QuickButton $gap={9} aria-label="粘贴"><PasteIcon /></QuickButton>
          <QuickButton $gap={0} aria-label="自定义"><CustomizeIcon /></QuickButton>
        </QuickBar>
        <Title>广联达预算计价 - [招标管理 - 巴楚县沪顺果脯科技园建设项目 - C:/Users/zhanghui/Desktop/巴楚县沪顺果脯科技园建设项目/巴楚县沪顺果脯科技园建设项目.GBQ5]</Title>
        <WindowButtons>
          <button aria-label="最小化"><MinIcon /></button>
          <button aria-label="还原"><RestoreIcon /></button>
          <button aria-label="关闭"><CloseIcon /></button>
        </WindowButtons>
      </TitleBar>

      <MenuBar>
        <Brand>
          <BrandLatin>GLodon</BrandLatin>
          <BrandCjk>广联达</BrandCjk>
          <BrandCaret />
        </Brand>
        <MenuTab $active>编制</MenuTab>
        <MenuTab>报表</MenuTab>
        <MenuTab>电子标</MenuTab>
        <MenuRight>
          <MenuTool aria-label="收起功能区"><ChevronUp /></MenuTool>
          <MenuTool $gap={14}><LearnIcon />在线学习<Caret $gap={8} /></MenuTool>
          <MenuTool $inner={9}><WindowsIcon /><span>窗口</span><Caret $gap={3} /></MenuTool>
          <MenuTool $gap={11} aria-label="用户"><PersonIcon /><Caret $gap={4} /></MenuTool>
          <MenuTool $gap={10} aria-label="助手"><RobotIcon /></MenuTool>
          <MenuTool $gap={15} aria-label="帮助"><HelpIcon /><Caret $gap={7} /></MenuTool>
        </MenuRight>
      </MenuBar>

      <Ribbon>
        <Group $w={69} $pad={6}>
          <Big w={62} icon={<ImportIcon />} label="导入" menu />
        </Group>
        <Group $w={157} $pad={4}>
          <Big w={74} icon={<CheckDocIcon />} label="项目自检" />
          <Big w={74} icon={<CostIcon />} label="费用查看" />
        </Group>
        <Group $w={156} $pad={5}>
          <Big w={73} icon={<TemplateIcon />} label="统一设置" second="模板类别" />
          <Big w={73} icon={<ConvertIcon />} label="数据转换" menu />
        </Group>
        <Group $w={199} $pad={1}>
          <Big w={66} icon={<CloudSaveIcon />} label="云存档" menu />
          <Big w={66} icon={<SmartIcon />} label="智能组价" />
          <Big w={65} icon={<CloudCheckIcon />} label="云检查" />
        </Group>
        <Group $w={241} $pad={6}>
          <Big w={52} icon={<QueryIcon />} label="查询" menu />
          <Big w={52} icon={<InsertIcon />} label="插入" menu />
          <Big w={52} icon={<AddDocIcon />} label="补充" menu />
          <SmallGrid $cols="70px" $single $left={9}>
            <Small icon={<DeleteIcon />} label="删除" />
          </SmallGrid>
        </Group>
        <Group $w={341} $pad={4}>
          <Big w={73} icon={<StandardIcon />} label="标准组价" />
          <Big w={73} icon={<ReuseIcon />} label="复用数据" />
          <Big w={73} icon={<ReplaceIcon />} label="替换数据" />
          <SmallGrid $cols="106px" $left={4}>
            <Small icon={<LockIcon />} label="锁定清单" />
            <Small icon={<ArrangeIcon />} label="整理清单" menu />
          </SmallGrid>
        </Group>
        <Group $w={83}>
          <Big w={82} icon={<HighRiseIcon />} label="超高降效" menu />
        </Group>
        <Group $w={84}>
          <Big w={83} icon={<RoundGlyph>模</RoundGlyph>} label="提取模板" second="项目" />
        </Group>
        <Group $w={321} $pad={10}>
          <SmallGrid $cols="82px 96px">
            <Small icon={<ColorIcon />} label="颜色" menu />
            <Small icon={<FindIcon />} label="查找" />
            <Small icon={<FilterIcon />} label="过滤" menu />
            <Small icon={<ExpandIcon />} label="展开到" menu />
          </SmallGrid>
          <ArrowGrid>
            <button aria-label="上移"><ArrowSvg dir={0} /></button>
            <button aria-label="左移"><ArrowSvg dir={270} color="#c4c4c4" /></button>
            <button aria-label="下移"><ArrowSvg dir={180} /></button>
            <button aria-label="右移"><ArrowSvg dir={90} color="#c4c4c4" /></button>
          </ArrowGrid>
          <Big w={61} icon={<TilesBox><TilesIcon /></TilesBox>} label="其他" menu />
        </Group>
        <Group $w={97} $pad={13}>
          <SmallGrid $cols="80px">
            <Small icon={<CalcIcon />} label="计算器" />
            <Small icon={<ToolIcon />} label="工具" menu />
          </SmallGrid>
        </Group>
      </Ribbon>

      <Body>
        <ProjectPanel>
          <PanelTools>
            <PanelTool>新建<Caret $gap={4} /></PanelTool>
            <PanelTool $gap={10}>导入导出<Caret $gap={5} /></PanelTool>
            <PanelTool $gap={11} aria-label="上移"><ArrowSvg dir={0} color="#c2c2c2" /></PanelTool>
            <PanelTool $gap={13} aria-label="下移"><ArrowSvg dir={180} color="#7ad866" /></PanelTool>
            <CollapseButton $raised aria-label="收起项目树"><DoubleLeft /></CollapseButton>
          </PanelTools>
          <NotchShape top={7} />
          <ProjectTree>
            <ProjectRow $root><BuildingIcon /><TreeText $gap={11}>巴楚县沪顺果脯科技…</TreeText></ProjectRow>
            {["1#生产车间", "2#生产车间", "3#生产车间"].map((t) => (
              <ProjectRow key={t}><Twisty><ClosedTwisty /></Twisty><HouseIcon /><TreeText $gap={9}>{t}</TreeText></ProjectRow>
            ))}
            <ProjectRow><Twisty><OpenTwisty /></Twisty><HouseIcon /><TreeText $gap={9}>办公楼</TreeText></ProjectRow>
          </ProjectTree>
          <SubTree>
            {["办公楼-土建", "办公楼-电气", "办公楼-给排水", "办公楼-采暖"].map((t, i) => (
              <SubRow key={t} $active={i === 0}><button>{t}</button></SubRow>
            ))}
          </SubTree>
        </ProjectPanel>

        <Work>
          <WorkTabs>
            {workTabs.map((t) => (
              <WorkTab key={t} $active={t === "分部分项"}>{t}</WorkTab>
            ))}
          </WorkTabs>
          <WorkBody>
            <SectionPanel>
              <SectionTree>
                <SectionRoot>
                  <RootFold />
                  <RootLabel><ProjectIcon />整个项目</RootLabel>
                  <CollapseButton aria-label="收起分部树"><DoubleLeft /></CollapseButton>
                </SectionRoot>
                <SectionList>
                  {sections.map((t, i) => (
                    <SectionRow key={t} $active={i === 8}><PageIcon /><button>{t}</button></SectionRow>
                  ))}
                </SectionList>
              </SectionTree>
              <NotchShape top={4} />
            </SectionPanel>

            <DataPanel>
              <GridArea>
                <GridClip>
                  <GridTable>
                    <colgroup>
                      {gridCols.map((w, i) => (
                        <Col key={i} $w={w} />
                      ))}
                    </colgroup>
                    <thead>
                      <tr>
                        {gridHead.map((t, i) => (
                          <Th key={i} $hot={i === 1} $left={i === 13}>{t}</Th>
                        ))}
                      </tr>
                    </thead>
                    <tbody>
                      {rows.map((r, i) => (
                        <Row key={i} $kind={r.kind}>
                          <RowHead $hot={r.selected}>{r.no}</RowHead>
                          <Td $selected={r.selected}><Code r={r} /></Td>
                          <Td $align="center">{r.serial}</Td>
                          <Td $align="center">{r.type}</Td>
                          <Td>{r.name}</Td>
                          <Td>{r.unit}</Td>
                          <Td>{r.expr}</Td>
                          <Td $align="center">{r.content}</Td>
                          <Td $align="right">{r.qty}</Td>
                          <Td $align="right">{r.price}</Td>
                          <Td $align="right">{r.total}</Td>
                          <Td $align="right">{r.unitAll}</Td>
                          <Td $align="right">{r.sumAll}</Td>
                          <Td>{r.file}</Td>
                        </Row>
                      ))}
                    </tbody>
                  </GridTable>
                </GridClip>
                <Highlight />
              </GridArea>

              <HScroll>
                <ScrollButton aria-label="向左滚动"><Tri dir={0} /></ScrollButton>
                <Thumb $w="35%" $before="calc(17% + 3px)" />
                <ScrollButton aria-label="向右滚动"><Tri dir={180} /></ScrollButton>
              </HScroll>
              <HandleRow>
                <Handle aria-label="收起明细">
                  <S w={12} h={7}><path d="M1 0l5 5 5-5" stroke="#fff" strokeWidth="1.500" /><path d="M3 0h6L6 3z" fill="#fff" /></S>
                </Handle>
              </HandleRow>
              <DetailTabs>
                {detailTabs.map((t) => (
                  <DetailTab key={t} $active={t === "工程量明细"}>{t}</DetailTab>
                ))}
              </DetailTabs>
              <Details>
                <FormulaPane>
                  <FormulaTop>
                    <TableClip $h={37}>
                      <GridTable>
                        <colgroup>
                          {[27, 146, 364, 112, 71, 101].map((w, i) => (
                            <Col key={i} $w={w} />
                          ))}
                        </colgroup>
                        <thead>
                          <tr>
                            {["", "内容说明", "计算式", "结果", "累加标识", "引用代码"].map((t, i) => (
                              <Th key={i}>{t}</Th>
                            ))}
                          </tr>
                        </thead>
                        <tbody>
                          <tr>
                            <td />
                            {[0, 1, 2, 3, 4].map((i) => (
                              <FormulaCell key={i} />
                            ))}
                          </tr>
                        </tbody>
                      </GridTable>
                    </TableClip>
                    <VScroll>
                      <ScrollButton aria-label="向上滚动"><Tri dir={90} /></ScrollButton>
                      <ScrollButton aria-label="向下滚动"><Tri dir={270} /></ScrollButton>
                    </VScroll>
                  </FormulaTop>
                  <Hint>说明：在计算式中，如需要注释请填写在 {"{ }"} 内.</Hint>
                </FormulaPane>
                <Splitter aria-label="收起变量">
                  <S w={7} h={12}><path d="M6 1L1 6l5 5" stroke="#fff" strokeWidth="1.500" /></S>
                </Splitter>
                <VariablePane>
                  <TableClip $h={50}>
                    <GridTable>
                      <colgroup>
                        {[26, 95, 141, 59, 60].map((w, i) => (
                          <Col key={i} $w={w} />
                        ))}
                      </colgroup>
                      <thead>
                        <tr>
                          {["", "变量名", "变量说明", "单位", ""].map((t, i) => (
                            <Th key={i} $hot={i === 1}>{t}</Th>
                          ))}
                        </tr>
                      </thead>
                      <tbody>
                        <tr>
                          <RowHead $hot $bold>1</RowHead>
                          <VarCell $on $center>JZMJ</VarCell>
                          <VarCell>建筑面积</VarCell>
                          <VarCell>m2</VarCell>
                          <VarCell>100</VarCell>
                        </tr>
                      </tbody>
                    </GridTable>
                  </TableClip>
                  <HScroll>
                    <ScrollButton aria-label="向左滚动"><Tri dir={0} /></ScrollButton>
                    <Thumb $w="193px" $before="0" />
                    <ScrollButton aria-label="向右滚动"><Tri dir={180} /></ScrollButton>
                  </HScroll>
                </VariablePane>
              </Details>
            </DataPanel>
          </WorkBody>
        </Work>
      </Body>

      <StatusBar>
        <Status $w={164} $pad={11}>计税方式：增值税</Status>
        <Status $w={301} $pad={21}>工程量清单项目计量规范(2013-新疆)</Status>
        <Status $w={399} $pad={20}>新疆建筑工程消耗量定额喀什地区单位估价表(2011)</Status>
        <Status $w={214} $pad={20}>建筑实体(分部分项)工程</Status>
        <Views>
          <button aria-label="视图一"><S w={16} h={16}><path d="M1 1h14v14H1z" stroke="#7d7d7d" strokeWidth="2" /><path d="M3 4h5M5 7h6v5H5zM8 2v4" stroke="#7d7d7d" strokeWidth="1.700" /></S></button>
          <button aria-label="视图二"><S w={16} h={16}><path d="M0 0h16v4H0zM0 5h4v11H0zM6 6h10v4H6zM6 12h10v4H6z" fill="#7d7d7d" /></S></button>
          <button aria-label="视图三"><S w={16} h={16}><path d="M0 0h16v4H0zM0 6h16v10H0z" fill="#7d7d7d" /></S></button>
        </Views>
      </StatusBar>
    </Page>
  );
}
